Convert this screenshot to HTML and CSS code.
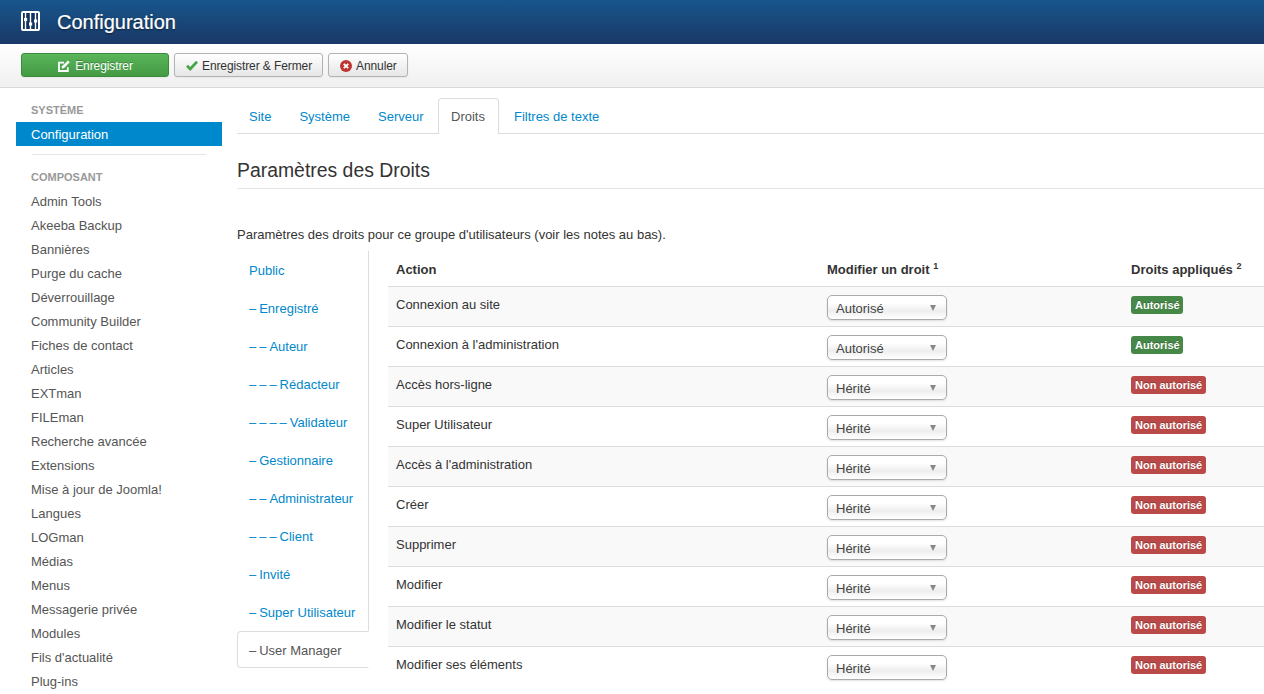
FILE: index.html
```html
<!DOCTYPE html>
<html lang="fr">
<head>
<meta charset="utf-8">
<title>Configuration</title>
<link rel="stylesheet" href="styles.css">
</head>
<body>
<header class="topbar">
  <svg class="logo" width="19" height="20" viewBox="0 0 19 20"><rect x="1" y="1" width="17" height="18" rx="1" fill="#12335f" stroke="#fff" stroke-width="2"/><path d="M4.5 2v16M9.5 2v16M14.5 2v16" stroke="#fff" stroke-width="1.4"/><path d="M3 8.5h3.2M8 13h3.2M13 10h3.2" stroke="#fff" stroke-width="3"/></svg>
  <h1 class="title">Configuration</h1>
</header>
<div class="toolbar">
  <button class="btn btn-save"><svg width="12" height="12" viewBox="0 0 12 12"><path d="M9.8 7.2V11H1V2.6h5" fill="none" stroke="#fff" stroke-width="1.8"/><path d="M4 6.3l-.4 2.3 2.3-.4L11.800 2.300 9.900.4z" fill="#fff"/></svg>Enregistrer</button>
  <button class="btn"><svg width="12" height="11" viewBox="0 0 12 11"><path d="M1 5.800l3.200 3.200L11 1.800" fill="none" stroke="#46a546" stroke-width="2.700"/></svg>Enregistrer &amp; Fermer</button>
  <button class="btn"><svg width="12" height="12" viewBox="0 0 12 12"><circle cx="6" cy="6" r="6" fill="#bd362f"/><path d="M3.800 3.800l4.400 4.400M8.200 3.800l-4.400 4.400" stroke="#fff" stroke-width="1.900"/></svg>Annuler</button>
</div>
<div class="page">
  <aside class="sidebar">
    <div class="nav-head">SYSTÈME</div>
    <a class="nav-active">Configuration</a>
    <div class="nav-divider"></div>
    <div class="nav-head nav-head-2">COMPOSANT</div>
    <a class="nav-item">Admin Tools</a>
    <a class="nav-item">Akeeba Backup</a>
    <a class="nav-item">Bannières</a>
    <a class="nav-item">Purge du cache</a>
    <a class="nav-item">Déverrouillage</a>
    <a class="nav-item">Community Builder</a>
    <a class="nav-item">Fiches de contact</a>
    <a class="nav-item">Articles</a>
    <a class="nav-item">EXTman</a>
    <a class="nav-item">FILEman</a>
    <a class="nav-item">Recherche avancée</a>
    <a class="nav-item">Extensions</a>
    <a class="nav-item">Mise à jour de Joomla!</a>
    <a class="nav-item">Langues</a>
    <a class="nav-item">LOGman</a>
    <a class="nav-item">Médias</a>
    <a class="nav-item">Menus</a>
    <a class="nav-item">Messagerie privée</a>
    <a class="nav-item">Modules</a>
    <a class="nav-item">Fils d'actualité</a>
    <a class="nav-item">Plug-ins</a>
  </aside>
  <main class="main">
    <nav class="tabs">
      <a class="tab">Site</a>
      <a class="tab">Système</a>
      <a class="tab">Serveur</a>
      <a class="tab tab-active">Droits</a>
      <a class="tab">Filtres de texte</a>
    </nav>
    <h2 class="heading">Paramètres des Droits</h2>
    <p class="intro">Paramètres des droits pour ce groupe d'utilisateurs (voir les notes au bas).</p>
    <div class="rights">
      <ul class="groups">
        <li class="group">Public</li>
        <li class="group"><span class="d">– </span>Enregistré</li>
        <li class="group"><span class="d">– </span><span class="d">– </span>Auteur</li>
        <li class="group"><span class="d">– </span><span class="d">– </span><span class="d">– </span>Rédacteur</li>
        <li class="group"><span class="d">– </span><span class="d">– </span><span class="d">– </span><span class="d">– </span>Validateur</li>
        <li class="group"><span class="d">– </span>Gestionnaire</li>
        <li class="group"><span class="d">– </span><span class="d">– </span>Administrateur</li>
        <li class="group"><span class="d">– </span><span class="d">– </span><span class="d">– </span>Client</li>
        <li class="group"><span class="d">– </span>Invité</li>
        <li class="group"><span class="d">– </span>Super Utilisateur</li>
        <li class="group group-active"><span class="d">– </span>User Manager</li>
      </ul>
      <div class="table">
        <div class="row row-head">
          <div class="c-action">Action</div>
          <div class="c-select">Modifier un droit <sup>1</sup></div>
          <div class="c-state">Droits appliqués <sup>2</sup></div>
        </div>
        <div class="row odd"><div class="c-action">Connexion au site</div><div class="c-select"><div class="select">Autorisé</div></div><div class="c-state"><span class="badge ok">Autorisé</span></div></div>
        <div class="row"><div class="c-action">Connexion à l'administration</div><div class="c-select"><div class="select">Autorisé</div></div><div class="c-state"><span class="badge ok">Autorisé</span></div></div>
        <div class="row odd"><div class="c-action">Accès hors-ligne</div><div class="c-select"><div class="select">Hérité</div></div><div class="c-state"><span class="badge no">Non autorisé</span></div></div>
        <div class="row"><div class="c-action">Super Utilisateur</div><div class="c-select"><div class="select">Hérité</div></div><div class="c-state"><span class="badge no">Non autorisé</span></div></div>
        <div class="row odd"><div class="c-action">Accès à l'administration</div><div class="c-select"><div class="select">Hérité</div></div><div class="c-state"><span class="badge no">Non autorisé</span></div></div>
        <div class="row"><div class="c-action">Créer</div><div class="c-select"><div class="select">Hérité</div></div><div class="c-state"><span class="badge no">Non autorisé</span></div></div>
        <div class="row odd"><div class="c-action">Supprimer</div><div class="c-select"><div class="select">Hérité</div></div><div class="c-state"><span class="badge no">Non autorisé</span></div></div>
        <div class="row"><div class="c-action">Modifier</div><div class="c-select"><div class="select">Hérité</div></div><div class="c-state"><span class="badge no">Non autorisé</span></div></div>
        <div class="row odd"><div class="c-action">Modifier le statut</div><div class="c-select"><div class="select">Hérité</div></div><div class="c-state"><span class="badge no">Non autorisé</span></div></div>
        <div class="row"><div class="c-action">Modifier ses éléments</div><div class="c-select"><div class="select">Hérité</div></div><div class="c-state"><span class="badge no">Non autorisé</span></div></div>
      </div>
    </div>
  </main>
</div>
</body>
</html>
```
FILE: styles.css
```css
* { box-sizing: border-box; }
html, body { margin: 0; height: 694px; overflow: hidden; background: #fff; }
body { font-family: "Liberation Sans", Arial, sans-serif; font-size: 13px; line-height: 18px; color: #333; }

.topbar { height: 44px; display: flex; align-items: center; padding-left: 21px; background: linear-gradient(#17568c, #1a3867); }
.logo { margin-top: -3px; }
.title { margin: -1px 0 0 17px; font-size: 20px; font-weight: 400; line-height: 24px; color: #fff; text-shadow: 0 1px 2px rgba(0,0,0,.6); -webkit-text-stroke: .2px #fff; }

.toolbar { height: 44px; display: flex; align-items: flex-start; gap: 5px; padding: 9px 0 0 21px; background: linear-gradient(#fff, #f0f0f0); border-bottom: 1px solid #d9d9d9; }
.btn { height: 24px; display: flex; align-items: center; justify-content: center; gap: 4px; padding: 1px 10px 0 11px; font: 12px/18px "Liberation Sans", Arial, sans-serif; letter-spacing: -.1px; color: #333; border: 1px solid #b3b3b3; border-radius: 3px; background: linear-gradient(#fff, #e6e6e6); box-shadow: 0 1px 2px rgba(0,0,0,.05); }
.btn-save { width: 148px; gap: 5px; color: #fff; background: linear-gradient(#5ab65a, #439a43); border-color: #3c8a3c; text-shadow: 0 -1px 0 rgba(0,0,0,.25); }

.page { display: flex; align-items: flex-start; padding-left: 16px; }
.sidebar { width: 206px; flex: none; padding-top: 13px; }
.nav-head { height: 18px; padding-left: 15px; font-size: 11px; font-weight: 700; line-height: 18px; color: #999; }
.nav-head-2 { margin-top: 13px; }
.nav-active { display: block; height: 24px; margin-top: 3px; padding-left: 15px; line-height: 26px; color: #fff; background: #0088cc; }
.nav-divider { height: 1px; margin: 8px 16px 0 16px; background: #e5e5e5; }
.nav-item { display: block; height: 24px; padding-left: 15px; line-height: 26px; color: #555; }
.nav-head-2 + .nav-item { margin-top: 3px; }

.main { flex: 1; min-width: 0; margin-left: 15px; }
.tabs { height: 46px; padding-top: 10px; display: flex; border-bottom: 1px solid #ddd; }
.tab { height: 36px; padding: 0 11px; margin-right: 4px; line-height: 36px; color: #0088cc; border: 1px solid transparent; border-bottom: 0; }
.tab-active { margin-left: -2px; margin-right: 3px; padding: 0 13px 0 12.5px; color: #555; background: #fff; border-color: #ddd; border-radius: 4px 4px 0 0; }
.heading { margin: 0; height: 55px; padding-top: 22px; font-size: 19.4px; font-weight: 400; line-height: 28px; color: #333; border-bottom: 1px solid #e5e5e5; }
.intro { margin: 37px 0 0; height: 18px; font-size: 13px; color: #333; }

.rights { display: flex; align-items: flex-start; margin-top: 7px; }
.groups { width: 132px; flex: none; margin: 0; padding: 0; list-style: none; border-right: 1px solid #ddd; }
.group { height: 38px; padding-left: 12px; line-height: 40px; color: #0088cc; }
.d { display: inline-block; width: 10.2px; line-height: 1; }
.group-active { height: 37px; line-height: 37px; margin-right: -1px; color: #555; background: #fff; border: 1px solid #ddd; border-right-color: #fff; border-radius: 4px 0 0 4px; padding-left: 11px; }
.table { flex: 1; min-width: 0; margin-left: 19px; }
.row { display: flex; height: 40px; padding-top: 9px; border-top: 1px solid #ddd; }
.row-head { height: 35px; padding-top: 9px; border-top: 0; font-weight: 700; color: #333; }
.row-head > div { padding-top: 1px; }
.odd { background: #f9f9f9; }
.c-action { width: 439px; flex: none; padding-left: 8px; }
.c-select { width: 304px; flex: none; }
.c-state { flex: 1; }
.row-head sup { font-size: 9px; line-height: 0; vertical-align: 5px; }
.select { position: relative; width: 120px; height: 25px; margin-top: -1px; padding-left: 8px; line-height: 25px; color: #444; border: 1px solid #aaa; border-radius: 5px; background: linear-gradient(#fff 0%, #fff 30%, #eee 65%, #fff 100%); box-shadow: 0 1px 2px rgba(0,0,0,.12); }
.select::after { content: ""; position: absolute; right: 10px; top: 9px; border: 3.5px solid transparent; border-top: 6px solid #888; border-bottom: 0; }
.badge { display: inline-block; height: 18px; padding: 0 4px; font-size: 11px; font-weight: 700; line-height: 18px; color: #fff; border-radius: 3px; text-shadow: 0 -1px 0 rgba(0,0,0,.25); vertical-align: top; }
.ok { padding-right: 3px; background: #468847; }
.no { background: #b94a48; }
```
